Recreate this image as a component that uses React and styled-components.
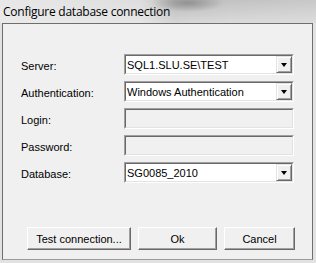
import React from "react";
import styled, { createGlobalStyle } from "styled-components";

const GlobalStyle = createGlobalStyle`
  html, body {
    margin: 0;
    padding: 0;
    background: #dcdcdc;
  }
  * {
    box-sizing: border-box;
  }
`;

const fields = [
  { label: "Server:", kind: "combo", value: "SQL1.SLU.SE\\TEST" },
  { label: "Authentication:", kind: "combo", value: "Windows Authentication" },
  { label: "Login:", kind: "text", value: "" },
  { label: "Password:", kind: "text", value: "" },
  { label: "Database:", kind: "combo", value: "SG0085_2010" },
];

const App = () => {
  return (
    <>
      <GlobalStyle />
      <Window>
        <TitleBar>Configure database connection</TitleBar>
        <Client>
          <Form>
            {fields.map((f) => (
              <React.Fragment key={f.label}>
                <Label>{f.label}</Label>
                {f.kind === "combo" ? (
                  <Sunken>
                    <Inner>
                      <Value>{f.value}</Value>
                      <DropButton>
                        <Arrow />
                      </DropButton>
                    </Inner>
                  </Sunken>
                ) : (
                  <Sunken>
                    <Inner $disabled />
                  </Sunken>
                )}
              </React.Fragment>
            ))}
          </Form>
          <Buttons>
            <Button $width={104}>Test connection...</Button>
            <Button $width={79}>Ok</Button>
            <Button $width={71}>Cancel</Button>
          </Buttons>
        </Client>
      </Window>
    </>
  );
};

// Window frame
const Window = styled.div`
  width: 316px;
  height: 263px;
  display: flex;
  flex-direction: column;
  background: #e2e2e2;
  overflow: hidden;
`;
const TitleBar = styled.div`
  height: 23px;
  padding: 3px 0 0 3px;
  font-family: "Open Sans", "Noto Sans", sans-serif;
  font-size: 12px;
  letter-spacing: -0.25px;
  color: #000;
  background:
    radial-gradient(ellipse 36px 9px at 188px 3px, rgba(110, 110, 110, 0.55), rgba(110, 110, 110, 0)),
    linear-gradient(to bottom, rgba(255, 255, 255, 0) 0, rgba(235, 235, 235, 0.6) 100%),
    linear-gradient(to right, #e8e8e8 0, #dedede 140px, #b8b8b8 175px, #c2c2c2 230px, #c8c8c8 316px);
`;
// Client area
const Client = styled.div`
  margin-left: 2px;
  width: 311px;
  height: 237px;
  border: 1px solid #6e6e6e;
  border-bottom-color: #9a9a9a;
  background: #f0f0f0;
  padding: 30px 0 0 18px;
  display: flex;
  flex-direction: column;
  font-family: "Liberation Sans", Arial, sans-serif;
  font-size: 11px;
  color: #000;
`;
const Form = styled.div`
  display: grid;
  grid-template-columns: 103px 170px;
  grid-auto-rows: 21px;
  row-gap: 6px;
  align-items: center;
`;
const Label = styled.div`
  padding-top: 2px;
`;
// Combo / text box
const Sunken = styled.div`
  height: 21px;
  border: 1px solid;
  border-color: #a0a0a0 #ffffff #ffffff #a0a0a0;
`;
const Inner = styled.div`
  height: 100%;
  border: 1px solid;
  border-color: #696969 #e3e3e3 #e3e3e3 #696969;
  background: ${(p) => (p.$disabled ? "#f0f0f0" : "#ffffff")};
  display: flex;
  align-items: center;
`;
const Value = styled.div`
  flex: 1;
  padding-left: 1px;
  white-space: nowrap;
  overflow: hidden;
`;
const DropButton = styled.div`
  width: 16px;
  height: 17px;
  display: flex;
  align-items: center;
  justify-content: center;
  background: #f0f0f0;
  border: 1px solid;
  border-color: #e3e3e3 #696969 #696969 #e3e3e3;
  box-shadow: inset 1px 1px 0 #ffffff, inset -1px -1px 0 #a0a0a0;
`;
const Arrow = styled.div`
  width: 0;
  height: 0;
  border-left: 3.5px solid transparent;
  border-right: 3.5px solid transparent;
  border-top: 4px solid #000;
  margin-top: 1px;
`;
// Buttons
const Buttons = styled.div`
  margin-top: auto;
  margin-bottom: 9px;
  margin-left: 6px;
  display: flex;
  gap: 7px;
`;
const Button = styled.div`
  width: ${(p) => p.$width}px;
  height: 23px;
  display: flex;
  align-items: center;
  justify-content: center;
  background: #f0f0f0;
  border: 1px solid;
  border-color: #ffffff #696969 #696969 #ffffff;
  box-shadow: inset -1px -1px 0 #a0a0a0;
  font-size: 11px;
`;

export default App;
